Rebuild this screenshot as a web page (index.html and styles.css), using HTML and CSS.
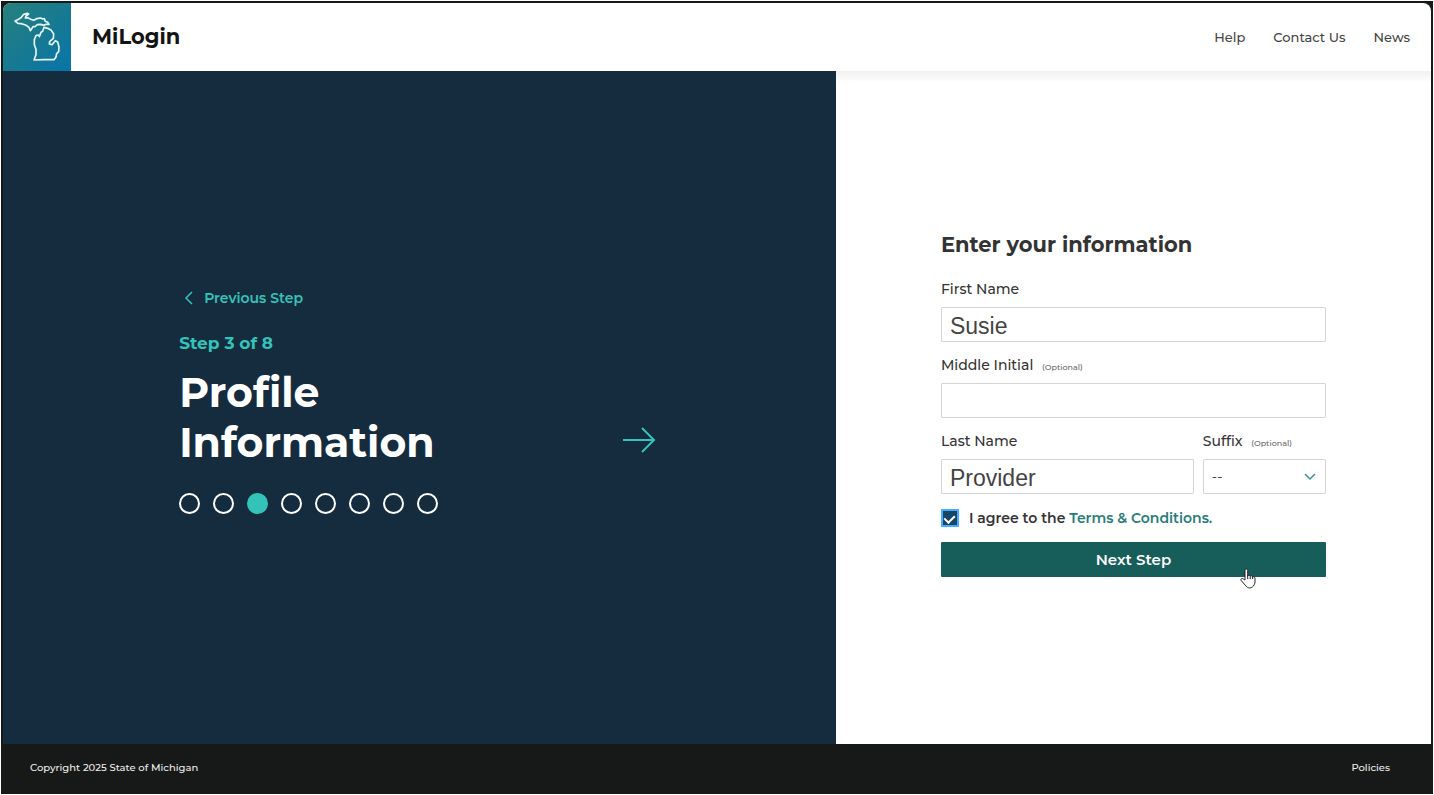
FILE: index.html
```
<!DOCTYPE html>
<html lang="en">
<head>
  <meta charset="UTF-8">
  <meta name="viewport" content="width=device-width, initial-scale=1">
  <title>MiLogin</title>
  <link rel="stylesheet" href="styles.css">
</head>
<body>
  <div class="page">

    <header class="header">
      <div class="logo">
        <svg viewBox="9 9 204 204" aria-hidden="true">
          <path d="M45 63 L53 59 L63 53 L71 43 L82 40 L86 42 L78 48 L76 54 L84 53 L92 58 L101 61 L110 56 L122 54 L128 57 L133 56 L136 64 L143 67 L147 73 L138 73 L132 76 L122 73 L112 74 L105 80 L99 80 L91 92 L87 82 L77 75 L63 71 L54 70 Z"/>
          <path d="M132 82 L143 85 L154 91 L161 102 L160 115 L149 125 L148 132 L156 134 L166 122 L173 126 L177 141 L176 155 L170 161 L168 171 L162 179 L132 179 L102 180 L108 164 L108 148 L103 134 L103 119 L108 107 L115 105 L118 110 L123 97 L128 94 Z"/>
        </svg>
      </div>
      <span class="brand">MiLogin</span>
      <nav class="nav">
        <a href="#">Help</a>
        <a href="#">Contact Us</a>
        <a href="#">News</a>
      </nav>
    </header>

    <main class="main">
      <section class="progress">
        <div class="progress-content">
          <a class="previous" href="#">
            <svg width="10" height="14" viewBox="0 0 10 14" aria-hidden="true"><path d="M8 1 L2 7 L8 13"/></svg>
            Previous Step
          </a>
          <p class="step">Step 3 of 8</p>
          <div class="title-row">
            <h1>Profile<br>Information</h1>
            <svg width="34" height="26" viewBox="0 0 34 26" aria-hidden="true"><path d="M1 13 H32 M20 1 L32 13 L20 25"/></svg>
          </div>
          <div class="dots">
            <span class="dot"></span>
            <span class="dot"></span>
            <span class="dot active"></span>
            <span class="dot"></span>
            <span class="dot"></span>
            <span class="dot"></span>
            <span class="dot"></span>
            <span class="dot"></span>
          </div>
        </div>
      </section>

      <section class="details">
        <form class="form">
          <h2>Enter your information</h2>
          <div class="form-group">
            <label for="firstName">First Name</label>
            <input type="text" id="firstName" value="Susie">
          </div>
          <div class="form-group">
            <label for="middleInitial">Middle Initial <small>(Optional)</small></label>
            <input type="text" id="middleInitial">
          </div>
          <div class="form-row">
            <div class="form-group last-name">
              <label for="lastName">Last Name</label>
              <input type="text" id="lastName" value="Provider">
            </div>
            <div class="form-group suffix">
              <label for="suffix">Suffix <small>(Optional)</small></label>
              <div class="select">
                <select id="suffix">
                  <option>--</option>
                  <option>Jr.</option>
                  <option>Sr.</option>
                </select>
                <svg width="12" height="8" viewBox="0 0 12 8" aria-hidden="true"><path d="M1 1 L6 6 L11 1"/></svg>
              </div>
            </div>
          </div>
          <div class="agree">
            <input type="checkbox" id="agree" checked>
            <label for="agree">I agree to the <a href="#">Terms &amp; Conditions.</a></label>
          </div>
          <div class="submit">
            <button class="btn" type="button">Next Step</button>
            <svg class="pointer" width="16" height="21" viewBox="0 0 16 21" aria-hidden="true">
              <path d="M5 12 V2.5 C5 .6 7.7 .6 7.7 2.5 V8 C8 6.8 10 7 10.2 8.3 C10.7 7.3 12.4 7.6 12.6 9 C13.3 8.3 15 8.8 15 10.3 V14 C15 16 13.8 16.8 13.5 18 C11.5 20.5 7.5 20.5 6 18 L1.2 12.6 C.2 11 2 9.8 3.2 10.8 Z"/>
              <path d="M7.7 8 V11 M10.2 8.3 V11 M12.6 9 V11"/>
            </svg>
          </div>
        </form>
      </section>
    </main>

    <footer class="footer">
      <span>Copyright 2025 State of Michigan</span>
      <a href="#">Policies</a>
    </footer>

  </div>
</body>
</html>
```
FILE: styles.css
```
* {
  box-sizing: border-box;
}

body {
  margin: 0;
  padding: 1px;
  background: #fff;
  color: #333;
  font-family: Montserrat, Inter, sans-serif;
  font-size: 14px;
  line-height: 20px;
}

a {
  text-decoration: none;
}

svg {
  flex: none;
  fill: none;
  stroke: currentColor;
}

h1, h2, p {
  margin: 0;
}

.page {
  display: flex;
  flex-direction: column;
  min-height: calc(100vh - 2px);
  border: 2px solid #171918;
  background: #171918;
}

/* Header */
.header {
  display: flex;
  align-items: center;
  height: 68px;
  padding-right: 21px;
  overflow: hidden;
  border-radius: 8px 8px 0 0;
  background: #fff;
}

.logo {
  width: 68px;
  height: 68px;
  background: linear-gradient(135deg, #27807a, #0874a9);
  color: #e4f5f8;
}

.logo svg {
  display: block;
  stroke-width: 5;
  stroke-linejoin: round;
}

.brand {
  margin-left: 21px;
  color: #141414;
  font-size: 21px;
  font-weight: 700;
}

.nav {
  display: flex;
  gap: 28px;
  margin-left: auto;
  font-size: 13px;
  font-weight: 500;
}

.nav a {
  color: #444;
}

/* Main */
.main {
  display: flex;
  flex: 1;
}

.progress {
  display: flex;
  align-items: center;
  justify-content: center;
  width: 58.33%;
  padding: 0 4px 14px 0;
  background: #152c3f;
  color: #34c3b8;
}

.progress-content {
  width: 57.5%;
}

.previous {
  display: flex;
  align-items: center;
  gap: 10px;
  padding-left: 5px;
  color: #34c3b8;
  font-weight: 600;
}

.previous svg {
  stroke-width: 1.5;
}

.step {
  margin-top: 23px;
  font-size: 17px;
  font-weight: 700;
  line-height: 24px;
}

.title-row {
  display: flex;
  align-items: flex-end;
  justify-content: space-between;
  margin-top: 12px;
}

.title-row svg {
  margin-bottom: 14px;
  stroke-width: 2;
}

h1 {
  color: #fff;
  font-size: 41px;
  line-height: 50px;
}

.dots {
  display: flex;
  gap: 13px;
  margin-top: 26px;
}

.dot {
  width: 21px;
  height: 21px;
  border: 2px solid #fff;
  border-radius: 50%;
}

.dot.active {
  border-color: #34c3b8;
  background: #34c3b8;
}

/* Form */
.details {
  display: flex;
  flex: 1;
  align-items: center;
  justify-content: center;
  padding-bottom: 7px;
  background: linear-gradient(#f1f1f1, #fff 12px);
}

.form {
  display: flex;
  flex-direction: column;
  gap: 13px;
  width: 65%;
  max-width: 385px;
}

h2 {
  margin-bottom: 7px;
  font-size: 21px;
  line-height: 28px;
}

.form-group {
  display: flex;
  flex-direction: column;
  gap: 8px;
  font-weight: 500;
}

.form-group small {
  margin-left: 5px;
  color: #666;
  font-size: 8px;
  line-height: 1;
}

.form-group input,
.form-group select {
  width: 100%;
  height: 35px;
  padding: 3px 8px 0;
  border: 1px solid #d5d5d5;
  border-radius: 1px;
  background: #fff;
  color: #444;
  font-family: "Liberation Sans", Arial, sans-serif;
  font-size: 23px;
}

.form-row {
  display: flex;
  gap: 9px;
}

.last-name {
  flex: 1;
}

.suffix {
  width: 32%;
}

.select {
  position: relative;
}

.form-group select {
  display: block;
  padding-top: 0;
  appearance: none;
  font-family: inherit;
  font-size: 14px;
}

.select svg {
  position: absolute;
  top: 14px;
  right: 10px;
  color: #3b939b;
  pointer-events: none;
  stroke-width: 1.5;
}

.agree {
  display: flex;
  align-items: center;
  gap: 12px;
  padding-left: 2px;
  font-weight: 600;
  line-height: 22px;
}

.agree a {
  color: #277c78;
}

.agree input {
  display: flex;
  justify-content: center;
  width: 14px;
  height: 14px;
  margin: 0;
  appearance: none;
  background: #174667;
  box-shadow: 0 0 0 2px #45adff;
}

.agree input:checked::after {
  content: "";
  width: 5px;
  height: 8px;
  margin-top: 2px;
  border: solid #fff;
  border-width: 0 2px 2px 0;
  transform: rotate(45deg);
}

.submit {
  position: relative;
}

.btn {
  display: block;
  width: 100%;
  height: 35px;
  border: 0;
  border-radius: 1px;
  background: #175e5b;
  color: #fff;
  cursor: pointer;
  font-family: inherit;
  font-size: 15px;
  font-weight: 600;
}

.pointer {
  position: absolute;
  top: 26px;
  right: 70px;
  fill: #fff;
  stroke: #222;
  pointer-events: none;
}

/* Footer */
.footer {
  display: flex;
  align-items: center;
  justify-content: space-between;
  height: 48px;
  padding: 0 41px 0 27px;
  color: #eee;
  font-size: 10px;
  font-weight: 500;
}

.footer a {
  color: #eee;
}
```
